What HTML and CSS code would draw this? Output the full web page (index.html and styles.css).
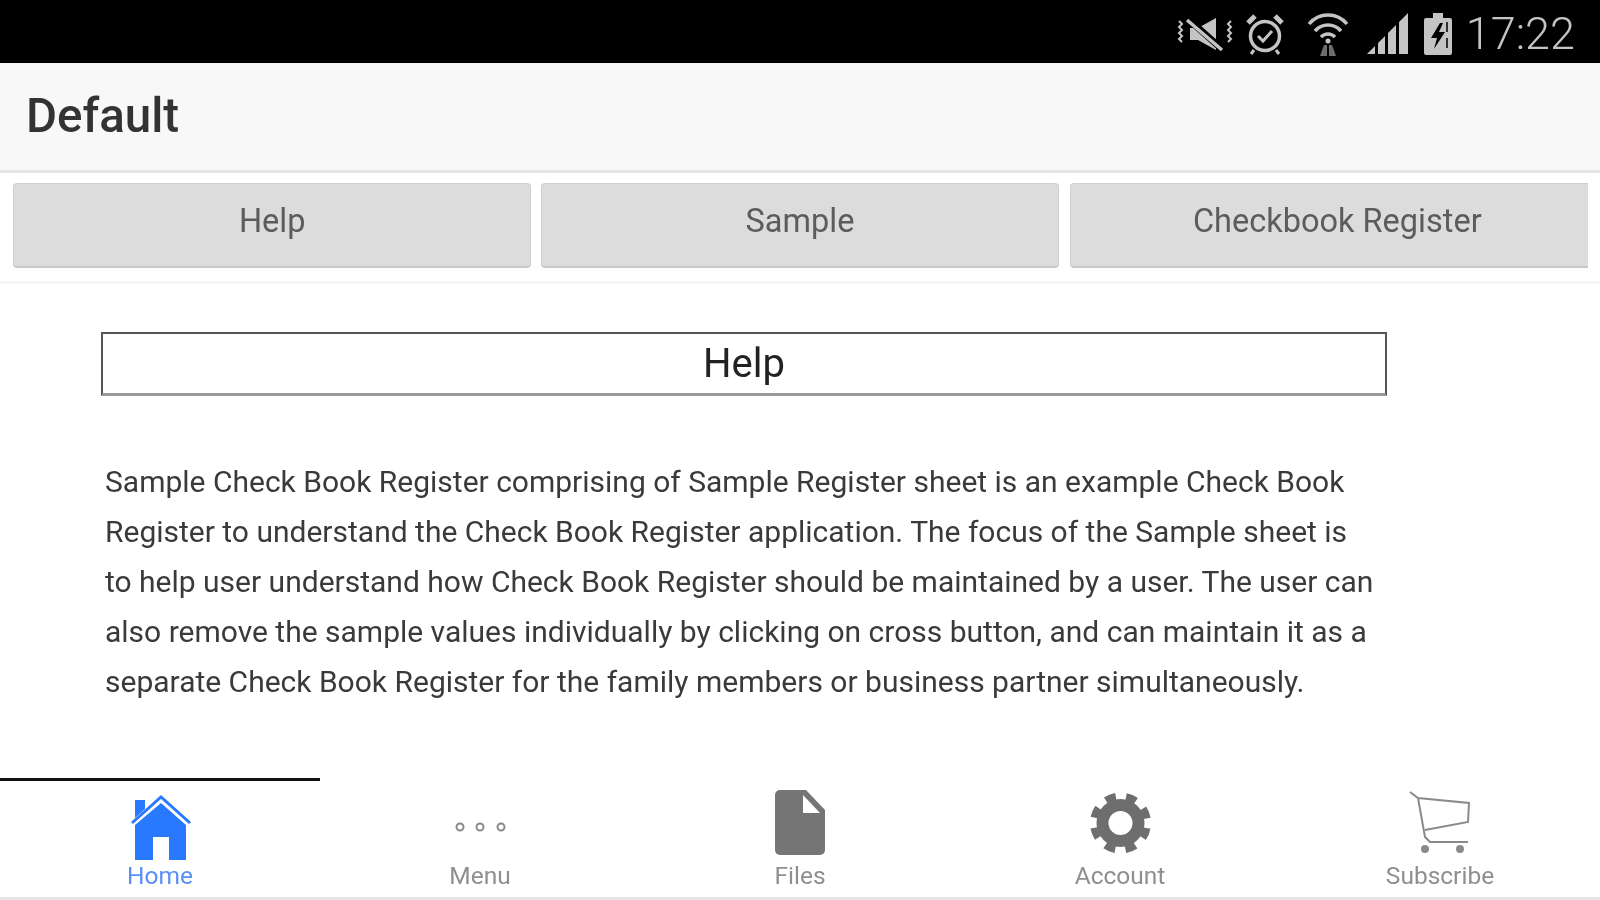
FILE: index.html
```html
<!DOCTYPE html>
<html>
<head>
    <title>Default</title>
    <link rel="stylesheet" href="styles.css">
</head>
<body>
    <div class="status-bar">
        <svg class="ic-mute" width="58" height="38" viewBox="0 0 58 38" fill="none" stroke="#c4c4c4">
            <path d="M3 6l3 3-3 3 3 3-3 3 3 3-3 3 3 3" stroke-width="2"/>
            <path d="M55 6l-3 3 3 3-3 3 3 3-3 3 3 3-3 3" stroke-width="2"/>
            <path d="M14 13h8L40 3v32L22 25h-8z" fill="#c4c4c4" stroke="none"/>
            <path d="M11 3l36 32" stroke="#000" stroke-width="7"/>
            <path d="M11 5l35 30" stroke-width="3.5"/>
        </svg>
        <svg class="ic-alarm" width="38" height="42" viewBox="0 0 38 42" fill="none" stroke="#c4c4c4" stroke-width="3.5">
            <circle cx="19" cy="23" r="14.5"/>
            <path d="M2 10l7-7M36 10l-7-7" stroke-width="5"/>
            <path d="M12 23l5 5 9-10" stroke-width="3"/>
            <path d="M8 37l-3 4M30 37l3 4" stroke-width="3"/>
        </svg>
        <svg class="ic-wifi" width="42" height="45" viewBox="0 0 42 45" fill="none" stroke="#c4c4c4" stroke-width="3.5">
            <path d="M2 13C12 1 30 1 40 13"/>
            <path d="M8 20C15 12 27 12 34 20"/>
            <path d="M14 26c4-4 10-4 14 0"/>
            <circle cx="21" cy="30" r="2.5" fill="#c4c4c4" stroke="none"/>
            <path d="M13 45l4-11h3v11zM22 45v-11h3l4 11z" fill="#6e6e6e" stroke="none"/>
        </svg>
        <svg class="ic-signal" width="42" height="42" viewBox="0 0 42 42" fill="#c4c4c4">
            <path d="M0 41L8 33v8zM11 30l7-7v18h-7zM21 20l8-8v29h-8zM32 9l9-9v41h-9z"/>
        </svg>
        <svg class="ic-battery" width="28" height="42" viewBox="0 0 28 42">
            <path d="M9 0h10v5h7a2 2 0 0 1 2 2v33a2 2 0 0 1-2 2H2a2 2 0 0 1-2-2V7a2 2 0 0 1 2-2h7z" fill="#c4c4c4"/>
            <path d="M16 10L7 25h6l-3 11 11-17h-6l4-9z" fill="#000"/>
            <path d="M23 9v10M23 25v10" stroke="#000" stroke-width="1.5"/>
        </svg>
        <span class="clock">17:22</span>
    </div>

    <div class="toolbar">
        <h1>Default</h1>
    </div>

    <div class="tabs">
        <button class="tab-btn tab-help">Help</button>
        <button class="tab-btn tab-sample">Sample</button>
        <button class="tab-btn tab-check">Checkbook Register</button>
    </div>

    <div class="content">
        <div class="help-title">Help</div>
        <p class="help-text">Sample Check Book Register comprising of Sample Register sheet is an example Check Book<br>Register to understand the Check Book Register application. The focus of the Sample sheet is<br>to help user understand how Check Book Register should be maintained by a user. The user can<br>also remove the sample values individually by clicking on cross button, and can maintain it as a<br>separate Check Book Register for the family members or business partner simultaneously.</p>
    </div>

    <div class="bottom-nav">
        <div class="nav-item active">
            <svg width="66" height="74" viewBox="0 0 66 74">
                <path d="M5 35L34 9l29 26" fill="none" stroke="#2979ff" stroke-width="3"/>
                <path d="M8 12h10v9L8 30z" fill="#2979ff"/>
                <path d="M34 15l25 22v35H42V49H26v23H8V37z" fill="#2979ff"/>
            </svg>
            <span>Home</span>
        </div>
        <div class="nav-item">
            <svg width="66" height="74" viewBox="0 0 66 74" fill="none" stroke="#8a8a8a" stroke-width="2">
                <circle cx="13" cy="39" r="3.5"/>
                <circle cx="33" cy="39" r="3.5"/>
                <circle cx="54" cy="39" r="3.5"/>
            </svg>
            <span>Menu</span>
        </div>
        <div class="nav-item">
            <svg width="66" height="74" viewBox="0 0 66 74">
                <path d="M13 2h26l19 20v40a5 5 0 0 1-5 5H13a5 5 0 0 1-5-5V7a5 5 0 0 1 5-5z" fill="#757575"/>
                <path d="M36 7v18h17z" fill="#fff"/>
            </svg>
            <span>Files</span>
        </div>
        <div class="nav-item">
            <svg width="66" height="74" viewBox="0 0 66 74" fill="none" stroke="#6e6e6e">
                <circle cx="33.5" cy="35" r="18" stroke-width="12"/>
                <circle cx="33.5" cy="35" r="27" stroke-width="7" stroke-dasharray="10.6 10.6" stroke-dashoffset="-5.3"/>
            </svg>
            <span>Account</span>
        </div>
        <div class="nav-item">
            <svg width="66" height="74" viewBox="0 0 66 74" fill="none" stroke="#8a8a8a" stroke-width="2">
                <path d="M3 4l8 6 51 5-1 19-43 8"/>
                <path d="M11 10l7 39 5 5h38"/>
                <circle cx="18" cy="61" r="3" fill="#8a8a8a"/>
                <circle cx="53" cy="61" r="3" fill="#8a8a8a"/>
            </svg>
            <span>Subscribe</span>
        </div>
    </div>
</body>
</html>
```

FILE: styles.css
```css
html, body {
    margin: 0;
    padding: 0;
    height: 900px;
    overflow: hidden;
    background: #fff;
    font-family: Roboto, "Liberation Sans", sans-serif;
}
body {
    display: flex;
    flex-direction: column;
    filter: blur(0.6px);
}
.status-bar {
    height: 63px;
    box-sizing: border-box;
    padding: 4px 25px 0 0;
    background: #000;
    display: flex;
    align-items: center;
    justify-content: flex-end;
}
.status-bar svg {
    flex: none;
}
.ic-mute { margin-right: 12px; }
.ic-alarm { margin-right: 23px; }
.ic-wifi { margin-right: 18px; }
.ic-signal { margin-right: 15px; }
.ic-battery { margin-right: 14px; }
.clock {
    color: #c4c4c4;
    font-size: 45px;
    font-weight: 300;
    line-height: 59px;
}
.toolbar {
    height: 107px;
    background: #f8f8f8;
    border-bottom: 3px solid #e6e6e6;
    display: flex;
    align-items: center;
    padding-left: 26px;
}
.toolbar h1 {
    margin: -2px 0 0;
    font-size: 47.5px;
    font-weight: 500;
    color: #333;
}
.tabs {
    display: flex;
    padding: 10px 12px 13px 13px;
    border-bottom: 3px solid #f4f4f4;
}
.tab-btn {
    width: 519px;
    height: 85px;
    margin-right: 10px;
    background: #dcdcdc;
    border: 1px solid #d0d0d0;
    border-bottom: 2px solid #c8c8c8;
    border-radius: 4px;
    color: #5c5c5c;
    font-family: inherit;
    font-size: 32.5px;
    padding: 0 0 8px;
}
.tab-sample {
    width: 518px;
    margin-right: 11px;
}
.tab-check {
    margin-right: 0;
    border-radius: 4px 0 0 4px;
    border-right: none;
    padding-left: 16px;
}
.content {
    flex: 1;
    padding: 48px 0 0 101px;
}
.help-title {
    width: 1282px;
    height: 59px;
    border: 2px solid #555;
    border-bottom: 3px solid #999;
    text-align: center;
    font-size: 40px;
    line-height: 60px;
    color: #222;
}
.help-text {
    margin: 61px 0 0 4px;
    font-size: 30px;
    line-height: 50px;
    color: #3a3a3a;
    white-space: nowrap;
}
.bottom-nav {
    height: 122px;
    flex: none;
    box-sizing: border-box;
    display: flex;
    border-bottom: 3px solid #e6e6e6;
}
.nav-item {
    width: 320px;
    display: flex;
    flex-direction: column;
    align-items: center;
    box-sizing: border-box;
    padding-top: 10px;
    color: #8f8f8f;
    font-size: 24.5px;
}
.nav-item span {
    line-height: 28px;
}
.nav-item.active {
    color: #5b8ff5;
    border-top: 3px solid #111;
    padding-top: 7px;
}
```
